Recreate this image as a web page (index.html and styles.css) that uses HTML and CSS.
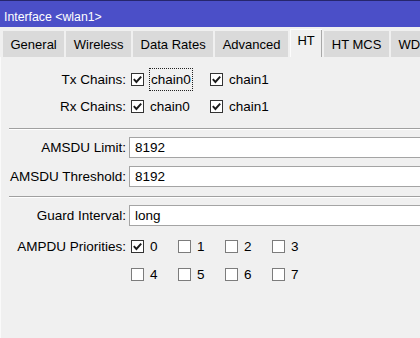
FILE: index.html
```html
<!DOCTYPE html>
<html>
<head>
<title>Interface &lt;wlan1&gt;</title>
<link rel="stylesheet" href="styles.css">
<meta charset="UTF-8">
</head>
<body>
<div class="window">

<div class="titlebar">Interface &lt;wlan1&gt;</div>

<div class="tabs">
  <span class="tab">General</span>
  <span class="tab">Wireless</span>
  <span class="tab">Data Rates</span>
  <span class="tab">Advanced</span>
  <span class="tab active">HT</span>
  <span class="tab">HT MCS</span>
  <span class="tab">WDS</span>
</div>

<div class="panel">
  <!-- chains -->
  <div class="row chk">
    <span class="lbl">Tx Chains:</span>
    <span class="opt wide"><span class="box on"><svg viewBox="0 0 11 11"><path d="M1.8 5.2 L4.4 8 L9.2 2.6"/></svg></span><span class="focus">chain0</span></span>
    <span class="opt wide"><span class="box on"><svg viewBox="0 0 11 11"><path d="M1.8 5.2 L4.4 8 L9.2 2.6"/></svg></span>chain1</span>
  </div>
  <div class="row chk">
    <span class="lbl">Rx Chains:</span>
    <span class="opt wide"><span class="box on"><svg viewBox="0 0 11 11"><path d="M1.8 5.2 L4.4 8 L9.2 2.6"/></svg></span>chain0</span>
    <span class="opt wide"><span class="box on"><svg viewBox="0 0 11 11"><path d="M1.8 5.2 L4.4 8 L9.2 2.6"/></svg></span>chain1</span>
  </div>

  <div class="sep"></div>

  <div class="row fld">
    <span class="lbl">AMSDU Limit:</span>
    <span class="input">8192</span>
  </div>
  <div class="row fld">
    <span class="lbl">AMSDU Threshold:</span>
    <span class="input">8192</span>
  </div>

  <div class="sep"></div>

  <div class="row fld">
    <span class="lbl">Guard Interval:</span>
    <span class="input">long</span>
  </div>

  <!-- priorities -->
  <div class="row prio first">
    <span class="lbl">AMPDU Priorities:</span>
    <span class="opt"><span class="box on"><svg viewBox="0 0 11 11"><path d="M1.8 5.2 L4.4 8 L9.2 2.6"/></svg></span>0</span>
    <span class="opt"><span class="box"></span>1</span>
    <span class="opt"><span class="box"></span>2</span>
    <span class="opt"><span class="box"></span>3</span>
  </div>
  <div class="row prio">
    <span class="lbl"></span>
    <span class="opt"><span class="box"></span>4</span>
    <span class="opt"><span class="box"></span>5</span>
    <span class="opt"><span class="box"></span>6</span>
    <span class="opt"><span class="box"></span>7</span>
  </div>
</div>

</div>
</body>
</html>
```

FILE: styles.css
```css
body {
  margin: 0;
  background: #f0f0f0;
  font-family: "Liberation Sans", Arial, sans-serif;
  font-size: 13.5px;
  color: #000;
  overflow: hidden;
}

.window {
  display: flex;
  flex-direction: column;
  height: 100vh;
}

.titlebar {
  box-sizing: border-box;
  height: 27px;
  border-top: 1px solid #26266e;
  background: #4b4fc8;
  color: #fff;
  font-size: 12.3px;
  line-height: 16px;
  padding: 8px 0 0 4px;
  white-space: nowrap;
}

/* tab strip */
.tabs {
  display: flex;
  align-items: flex-end;
  gap: 2px;
  height: 30px;
  padding-left: 3px;
  font-size: 13px;
  white-space: nowrap;
  overflow: hidden;
}
.tab {
  flex: none;
  box-sizing: border-box;
  height: 26px;
  padding: 2px 7.5px 0;
  line-height: 24px;
  background: #dadada;
}
.tab.active {
  height: 28px;
  padding-top: 0;
  background: #f0f0f0;
  box-shadow: inset 1px 1px #fcfcfc, inset -1px 0 #a8a8a8;
}

.panel {
  flex: 1;
  padding-top: 9px;
  box-shadow: inset 1px 0 #fafafa;
}

.row { display: flex; align-items: center; white-space: nowrap; }
.chk { height: 27px; }
.fld { height: 29px; }
.prio { height: 28px; }
.prio.first { margin-top: 2px; }

.lbl {
  flex: none;
  width: 126px;
  text-align: right;
}

.opt {
  flex: none;
  display: flex;
  align-items: center;
  width: 47px;
}
.opt.wide { width: 79px; }
.lbl + .opt { margin-left: 5px; }

.box {
  flex: none;
  box-sizing: border-box;
  width: 13px;
  height: 13px;
  margin-right: 6px;
  border: 1px solid #7c7c7c;
  background: #fff;
}
.box.on { border-color: #333; }
.box svg { display: block; width: 11px; height: 11px; }
.box path { fill: none; stroke: #1a1a1a; stroke-width: 1.9; }

.focus {
  display: inline-block;
  margin-left: -1px;
  padding: 0 1px;
  line-height: 21px;
  border: 1px dotted #222;
}

.input {
  flex: 1;
  box-sizing: border-box;
  height: 21px;
  margin: 0 -10px 0 3px;
  padding-left: 5px;
  line-height: 19px;
  background: #fff;
  border: 1px solid #a4a4a4;
}

.sep {
  margin: 8px 0 3px 9px;
  border-top: 1px solid #a0a0a0;
  border-bottom: 1px solid #fff;
}
.fld + .sep { margin-top: 5px; }
```
